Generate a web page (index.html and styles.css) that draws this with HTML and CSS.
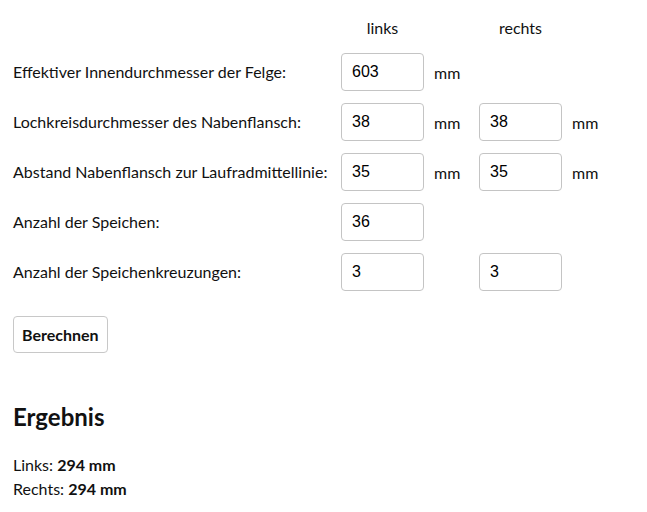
FILE: index.html
```html
<!DOCTYPE html>
<html lang="de">
<head>
<meta charset="utf-8">
<title>Speichenlängenrechner</title>
<link rel="stylesheet" href="styles.css">
</head>
<body>
<main class="page">
  <form class="calc">
    <div class="grid">
      <span></span>
      <span class="colhead">links</span>
      <span></span>
      <span class="colhead">rechts</span>
      <span></span>

      <label class="label">Effektiver Innendurchmesser der Felge:</label>
      <input class="field" type="text" value="603">
      <span class="unit">mm</span>
      <span></span>
      <span></span>

      <label class="label">Lochkreisdurchmesser des Nabenflansch:</label>
      <input class="field" type="text" value="38">
      <span class="unit">mm</span>
      <input class="field" type="text" value="38">
      <span class="unit">mm</span>

      <label class="label">Abstand Nabenflansch zur Laufradmittellinie:</label>
      <input class="field" type="text" value="35">
      <span class="unit">mm</span>
      <input class="field" type="text" value="35">
      <span class="unit">mm</span>

      <label class="label">Anzahl der Speichen:</label>
      <input class="field" type="text" value="36">
      <span></span>
      <span></span>
      <span></span>

      <label class="label">Anzahl der Speichenkreuzungen:</label>
      <input class="field" type="text" value="3">
      <span></span>
      <input class="field" type="text" value="3">
      <span></span>
    </div>
    <button class="btn" type="button">Berechnen</button>
  </form>

  <section class="result">
    <h2 class="result-title">Ergebnis</h2>
    <p class="result-line">Links: <strong>294 mm</strong></p>
    <p class="result-line">Rechts: <strong>294 mm</strong></p>
  </section>
</main>
</body>
</html>
```

FILE: styles.css
```css
html, body {
  margin: 0;
  padding: 0;
  background: #fff;
}

body {
  font-family: Lato, "Noto Sans", sans-serif;
  font-size: 16px;
  color: #111;
}

.page {
  padding: 15px 13px 0 13px;
}

.grid {
  display: grid;
  grid-template-columns: 328px 83px 55px 83px 60px;
  grid-template-rows: 26px;
  grid-auto-rows: 38px;
  row-gap: 12px;
  align-items: center;
}

.colhead {
  text-align: center;
  line-height: 26px;
}

.label {
  line-height: 20px;
}

.unit {
  padding-left: 10px;
}

.field {
  box-sizing: border-box;
  width: 83px;
  height: 38px;
  margin: 0;
  padding: 0 10px;
  border: 1px solid #c4c4c4;
  border-radius: 4px;
  font-family: "Liberation Sans", Arial, sans-serif;
  font-size: 16px;
  color: #000;
  background: #fff;
}

.btn {
  box-sizing: border-box;
  margin-top: 25px;
  height: 37px;
  padding: 0 8px;
  border: 1px solid #c8c8c8;
  border-radius: 4px;
  background: #fff;
  font-family: Lato, sans-serif;
  font-weight: 700;
  font-size: 16px;
  color: #111;
}

.result {
  margin-top: 49px;
}

.result-title {
  margin: 0 0 21px 0;
  font-size: 24px;
  font-weight: 700;
  line-height: 30px;
}

.result-line {
  margin: 0;
  line-height: 24px;
  font-size: 16px;
}
```
